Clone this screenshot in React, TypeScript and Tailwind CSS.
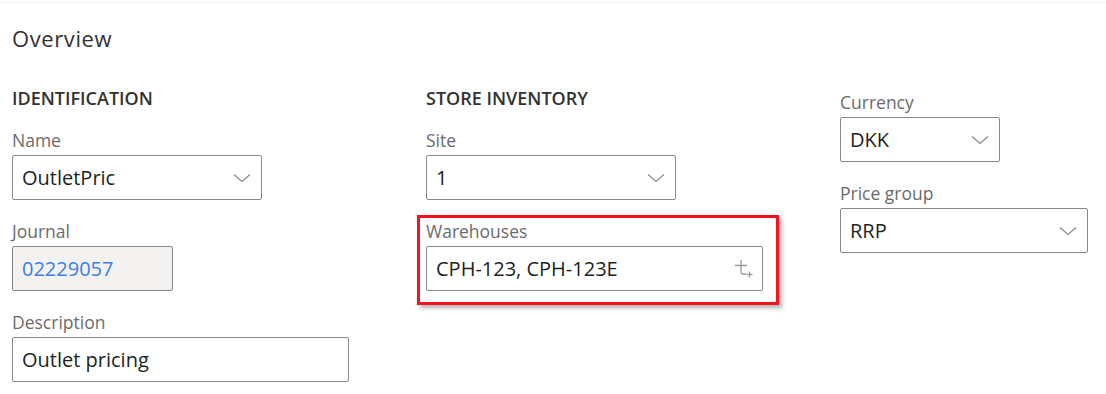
const font = { fontFamily: '"Open Sans", "Noto Sans", sans-serif' };

const Chevron = () => (
    <svg width="18" height="10" viewBox="0 0 18 10" className="shrink-0">
        <path d="M1 1.5 L9 8.5 L17 1.5" fill="none" stroke="#8a8886" strokeWidth="1.2" />
    </svg>
);

const LookupAdd = () => (
    <svg width="20" height="20" viewBox="0 0 20 20" className="shrink-0 -mr-[2px]">
        <path d="M1 6.5 H13 M7 1 V13.5 Q7 15 8.5 15 H12" fill="none" stroke="#9a9896" strokeWidth="1.3" />
        <path d="M12.5 15.5 H18.5 M15.5 12.5 V18.5" fill="none" stroke="#9a9896" strokeWidth="1.3" />
    </svg>
);

interface FieldProps {
    label: string;
    value: string;
    width: string;
    kind?: 'select' | 'text' | 'readonly' | 'lookup';
}

const Field: React.FC<FieldProps> = ({ label, value, width, kind = 'text' }) => (
    <div className="flex flex-col">
        <label className="text-[17.5px] leading-[22px] text-[#6b6b6b]">{label}</label>
        <div
            className={`mt-1 h-[45px] flex items-center justify-between pl-[9px] pr-[10px] border border-[#8a8886] rounded-[2px] ${width} ${kind === 'readonly' ? 'bg-[#f3f2f1]' : 'bg-white'}`}
        >
            <span className={`text-[20px] ${kind === 'readonly' ? 'text-[#3a7fe3]' : 'text-[#201f1e]'}`}>{value}</span>
            {kind === 'select' && <Chevron />}
            {kind === 'lookup' && <LookupAdd />}
        </div>
    </div>
);

export default function App() {
    return (
        <div className="w-[1106px] h-[394px] bg-white overflow-hidden" style={font}>
            <div className="h-[3px] border-b border-[#f1f1f1]" />
            <div className="pl-3 pt-[21px]">
                <h2 className="text-[22px] leading-[28px] tracking-[0.6px] text-[#323130]">Overview</h2>

                <div className="mt-[35px] grid grid-cols-[414px_414px_1fr]">
                    {/* Identification */}
                    <div className="flex flex-col">
                        <h3 className="text-[18px] leading-[22px] font-semibold text-[#323130]">IDENTIFICATION</h3>
                        <div className="mt-5 flex flex-col gap-5">
                            <Field label="Name" value="OutletPric" width="w-[250px]" kind="select" />
                            <Field label="Journal" value="02229057" width="w-[161px]" kind="readonly" />
                            <Field label="Description" value="Outlet pricing" width="w-[337px]" />
                        </div>
                    </div>

                    {/* Store inventory */}
                    <div className="flex flex-col">
                        <h3 className="text-[18px] leading-[22px] font-semibold text-[#323130]">STORE INVENTORY</h3>
                        <div className="mt-5 flex flex-col gap-5">
                            <Field label="Site" value="1" width="w-[250px]" kind="select" />
                            <div className="relative">
                                <div className="absolute -top-[5px] -left-[9px] w-[362px] h-[90px] border-[3px] border-[#f5141e] shadow-[3px_3px_4px_rgba(0,0,0,0.3)] pointer-events-none" />
                                <Field label="Warehouses" value="CPH-123, CPH-123E" width="w-[337px]" kind="lookup" />
                            </div>
                        </div>
                    </div>

                    {/* Pricing */}
                    <div className="flex flex-col gap-5 mt-1">
                        <Field label="Currency" value="DKK" width="w-[160px]" kind="select" />
                        <Field label="Price group" value="RRP" width="w-[248px]" kind="select" />
                    </div>
                </div>
            </div>
        </div>
    );
}
